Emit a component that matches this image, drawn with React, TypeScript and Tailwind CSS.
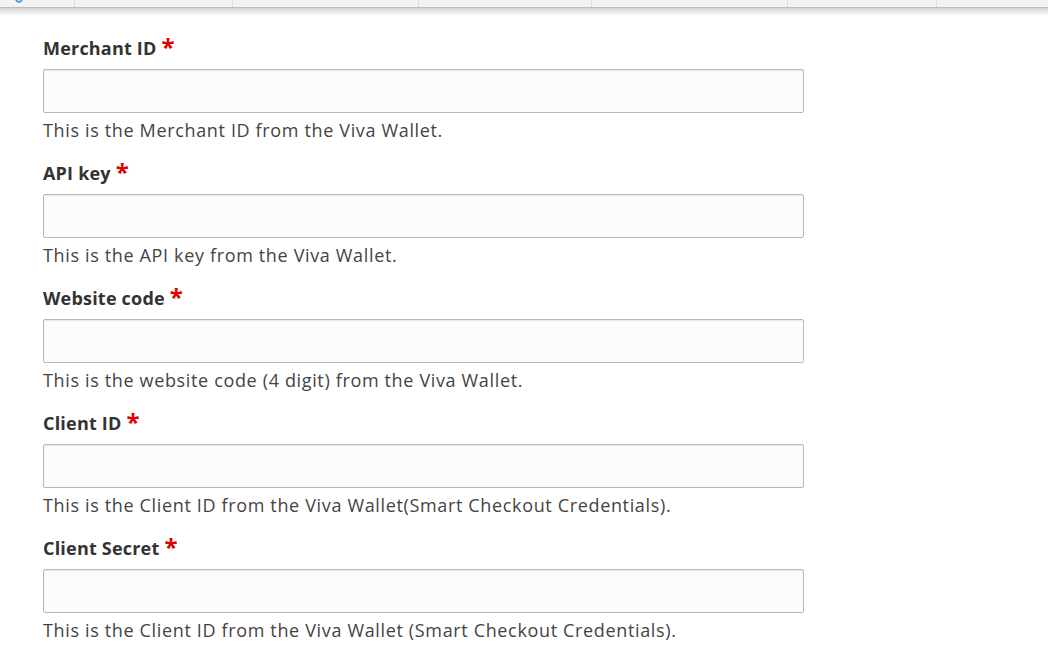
import React from "react";

const fields = [
  { label: "Merchant ID", desc: "This is the Merchant ID from the Viva Wallet." },
  { label: "API key", desc: "This is the API key from the Viva Wallet." },
  { label: "Website code", desc: "This is the website code (4 digit) from the Viva Wallet." },
  { label: "Client ID", desc: "This is the Client ID from the Viva Wallet(Smart Checkout Credentials)." },
  { label: "Client Secret", desc: "This is the Client ID from the Viva Wallet (Smart Checkout Credentials)." },
];

export default function App() {
  return (
    <div className="w-[1048px] h-[661px] bg-white overflow-hidden relative" style={{ fontFamily: '"Open Sans", "Noto Sans", sans-serif' }}>
      <div className="relative h-[8px] bg-[#f3f3f0] border-b border-[#bdbdbd] flex">
        <div className="w-[75px] h-[7px] border-r border-[#dcdcd8] relative">
          <svg className="absolute left-[13px] top-[-8px]" width="12" height="12" viewBox="0 0 12 12">
            <path d="M2 4 Q3 10 6 10 Q9 10 10 4" fill="none" stroke="#3da2e0" strokeWidth="2" />
          </svg>
        </div>
        <div className="w-[158px] h-[7px] border-r border-[#dcdcd8]" />
        <div className="w-[186px] h-[7px] border-r border-[#dcdcd8]" />
        <div className="w-[173px] h-[7px] border-r border-[#dcdcd8]" />
        <div className="w-[196px] h-[7px] border-r border-[#dcdcd8]" />
        <div className="w-[149px] h-[7px] border-r border-[#dcdcd8]" />
      </div>
      <div className="h-[8px] bg-gradient-to-b from-[#d4d4d4] to-white" />
      <div className="pl-[43px] pt-[19px]">
        {fields.map((f) => (
          <div key={f.label} className="mb-[16px]">
            <div className="h-[27px] leading-[27px] text-[18px] font-bold tracking-[0.2px] text-[#333] mb-[7px] flex items-start">
              <span>{f.label}</span>
              <span className="ml-[5px] text-[#e00000] text-[24px] leading-[27px] relative top-[-2px]">*</span>
            </div>
            <div className="w-[761px] h-[44px] bg-[#fcfcfa] border border-[#b8b8b8] rounded-[2px] shadow-[inset_0_1px_1px_rgba(0,0,0,0.08)]" />
            <div className="mt-[4px] h-[27px] leading-[27px] text-[18px] tracking-[0.65px] text-[#444]">{f.desc}</div>
          </div>
        ))}
      </div>
    </div>
  );
}
